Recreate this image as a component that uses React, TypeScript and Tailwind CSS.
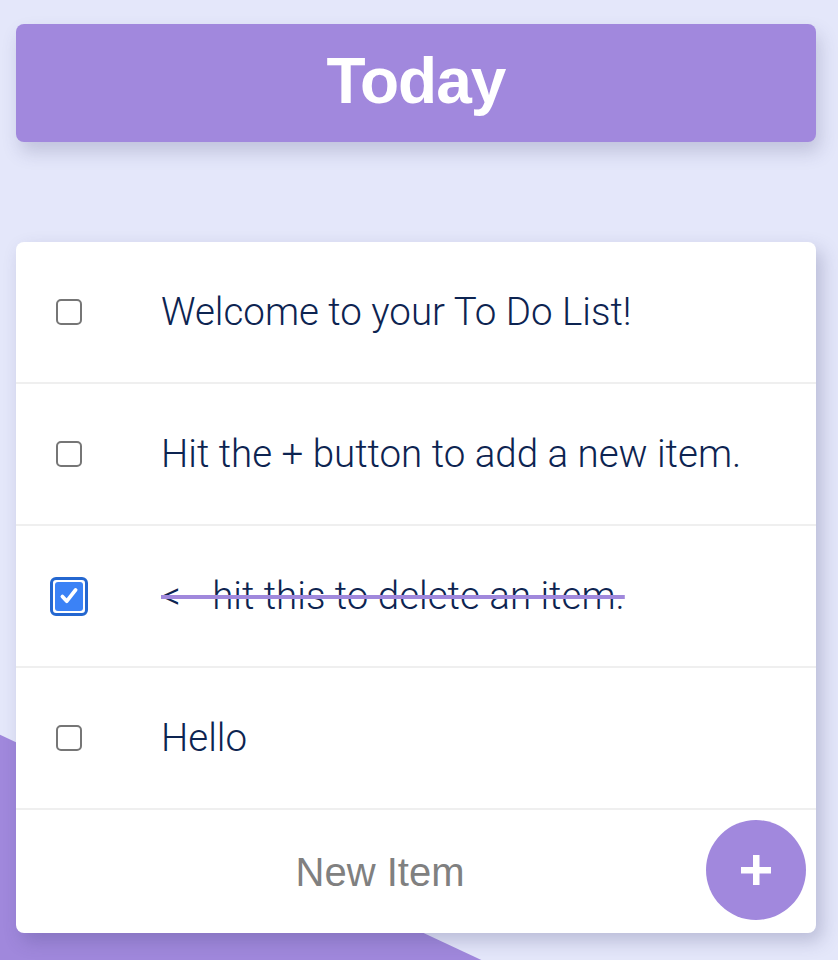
import { useState } from "react";

const initialItems = [
  { id: 1, text: "Welcome to your To Do List!", done: false },
  { id: 2, text: "Hit the + button to add a new item.", done: false },
  { id: 3, text: "<-- hit this to delete an item.", done: true },
  { id: 4, text: "Hello", done: false },
];

function Checkbox({ checked, onToggle }: { checked: boolean; onToggle: () => void }) {
  if (checked) {
    return (
      <button
        onClick={onToggle}
        aria-label="Uncheck item"
        className="w-[38px] h-[39px] shrink-0 rounded-[6px] border-[3px] border-[#2467d0] bg-white p-[2px] flex"
      >
        <span className="flex-1 rounded-[3px] bg-[#3b82f6] flex items-center justify-center">
          <svg viewBox="0 0 20 20" className="w-[22px] h-[22px]" fill="none">
            <path d="M4 10.5l4 4.2L16 4.5" stroke="white" strokeWidth="3.4" strokeLinecap="round" strokeLinejoin="round" />
          </svg>
        </span>
      </button>
    );
  }
  return (
    <button
      onClick={onToggle}
      aria-label="Check item"
      className="w-[26px] h-[26px] shrink-0 rounded-[5px] border-2 border-[#767676] bg-white"
    />
  );
}

export default function App() {
  const [items, setItems] = useState(initialItems);
  const [draft, setDraft] = useState("");

  const toggle = (id: number) =>
    setItems(items.map((it) => (it.id === id ? { ...it, done: !it.done } : it)));

  const addItem = () => {
    if (!draft.trim()) return;
    setItems([...items, { id: Date.now(), text: draft, done: false }]);
    setDraft("");
  };

  return (
    <div className="relative min-h-screen overflow-hidden bg-[#e4e7fa] pl-4 pt-6 pb-8 font-['Liberation_Sans',Arial,sans-serif]">
      {/* background wedge */}
      <svg
        className="absolute inset-0 w-full h-full"
        viewBox="0 0 838 960"
        preserveAspectRatio="none"
      >
        <polygon points="0,731 838,1121 0,1121" fill="#a088dc" />
      </svg>

      <div className="relative w-[800px]">
        <header className="h-[118px] rounded-lg bg-[#a188dd] flex items-center justify-center shadow-[4px_10px_18px_rgba(70,70,120,0.22)]">
          <h1 className="text-white font-bold text-[64px] tracking-[-0.015em] leading-none -mt-1">Today</h1>
        </header>

        <main className="mt-[100px] rounded-lg bg-white shadow-[6px_8px_18px_rgba(60,60,110,0.25)]">
          {items.map((item) => (
            <div
              key={item.id}
              className="h-[142px] border-b-2 border-[#efefef] flex items-center pl-[40px]"
            >
              <div className="w-[26px] flex justify-center">
                <Checkbox checked={item.done} onToggle={() => toggle(item.id)} />
              </div>
              <p
                className={`ml-[79px] font-['Roboto',sans-serif] font-light text-[38.5px] text-[#0d2451] ${
                  item.done ? "line-through decoration-[#a088dc] decoration-[4px]" : ""
                }`}
              >
                {item.text}
              </p>
            </div>
          ))}

          <div className="h-[123px] flex items-center">
            <input
              value={draft}
              onChange={(e) => setDraft(e.target.value)}
              onKeyDown={(e) => e.key === "Enter" && addItem()}
              placeholder="New Item"
              className="ml-[38px] w-[662px] min-w-0 bg-transparent text-center text-[40px] text-[#333] placeholder:text-[#808080] outline-none"
            />
            <button
              onClick={addItem}
              aria-label="Add item"
              className="ml-auto mr-[10px] -mt-1 shrink-0 w-[100px] h-[100px] rounded-full bg-[#a188dd] flex items-center justify-center"
            >
              <svg viewBox="0 0 30 30" className="w-[30px] h-[30px]">
                <rect x="12" y="0" width="6.5" height="30" fill="white" />
                <rect x="0" y="12" width="30" height="6.5" fill="white" />
              </svg>
            </button>
          </div>
        </main>
      </div>
    </div>
  );
}
